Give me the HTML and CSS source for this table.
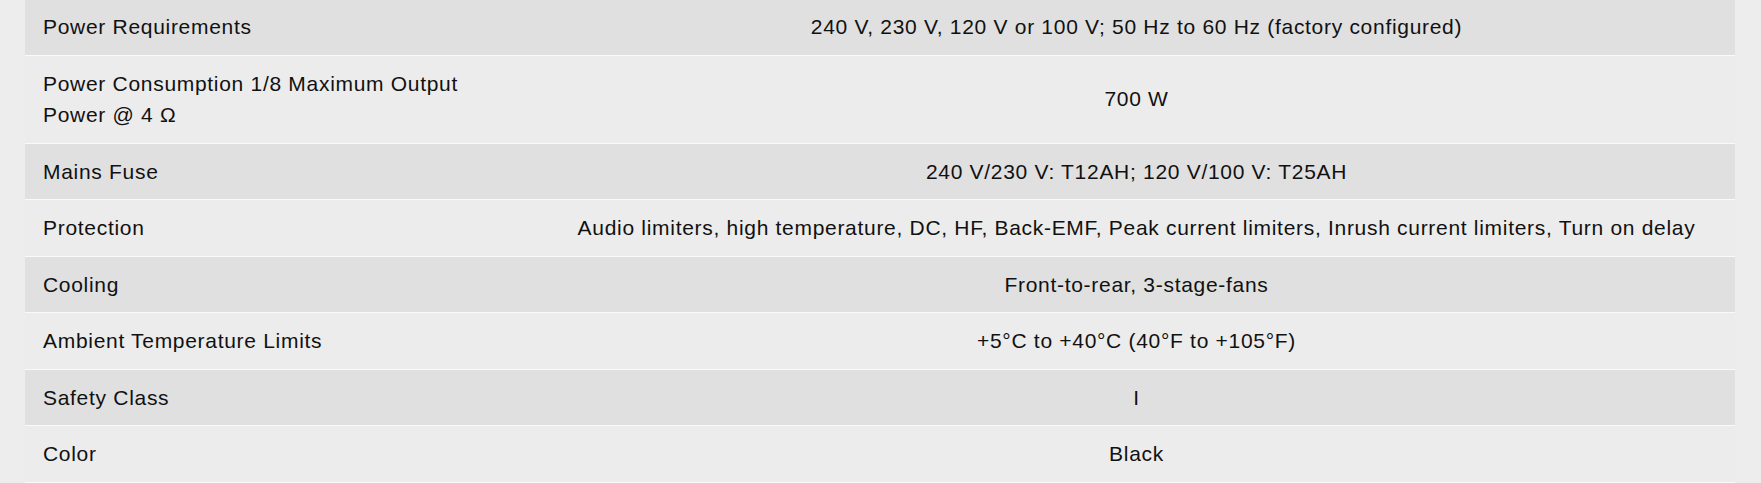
FILE: index.html
```html
<!DOCTYPE html>
<html lang="en">
<head>
<meta charset="utf-8">
<title>Specifications</title>
<link rel="stylesheet" href="styles.css">
</head>
<body>
<div class="page">
  <table class="specs">
    <tbody>
      <tr class="row-dark"><td class="label">Power Requirements</td><td class="value">240 V, 230 V, 120 V or 100 V; 50 Hz to 60 Hz (factory configured)</td></tr>
      <tr class="row-light"><td class="label">Power Consumption 1/8 Maximum Output Power @ 4 Ω</td><td class="value">700 W</td></tr>
      <tr class="row-dark"><td class="label">Mains Fuse</td><td class="value">240 V/230 V: T12AH; 120 V/100 V: T25AH</td></tr>
      <tr class="row-light"><td class="label">Protection</td><td class="value">Audio limiters, high temperature, DC, HF, Back-EMF, Peak current limiters, Inrush current limiters, Turn on delay</td></tr>
      <tr class="row-dark"><td class="label">Cooling</td><td class="value">Front-to-rear, 3-stage-fans</td></tr>
      <tr class="row-light"><td class="label">Ambient Temperature Limits</td><td class="value">+5°C to +40°C (40°F to +105°F)</td></tr>
      <tr class="row-dark"><td class="label">Safety Class</td><td class="value">I</td></tr>
      <tr class="row-light"><td class="label">Color</td><td class="value">Black</td></tr>
    </tbody>
  </table>
</div>
</body>
</html>
```

FILE: styles.css
```css
html, body {
  margin: 0;
  padding: 0;
  background: #ededed;
}

body {
  font-family: "Liberation Sans", Arial, sans-serif;
  font-size: 21px;
  line-height: 31.5px;
  color: #111111;
  letter-spacing: 0.7px;
}

.page {
  padding: 0 26px 0 25px;
  margin-top: -1px;
}

.specs {
  width: 100%;
  border-collapse: collapse;
  table-layout: fixed;
}

.specs td {
  box-sizing: border-box;
  padding: 12px 18px;
  border-bottom: 1px solid #fafafa;
  vertical-align: middle;
}

.row-dark {
  background: #e0e0e0;
}

.row-light {
  background: #ececec;
}

.label {
  width: 30%;
  text-align: left;
}

.value {
  text-align: center;
}
```
